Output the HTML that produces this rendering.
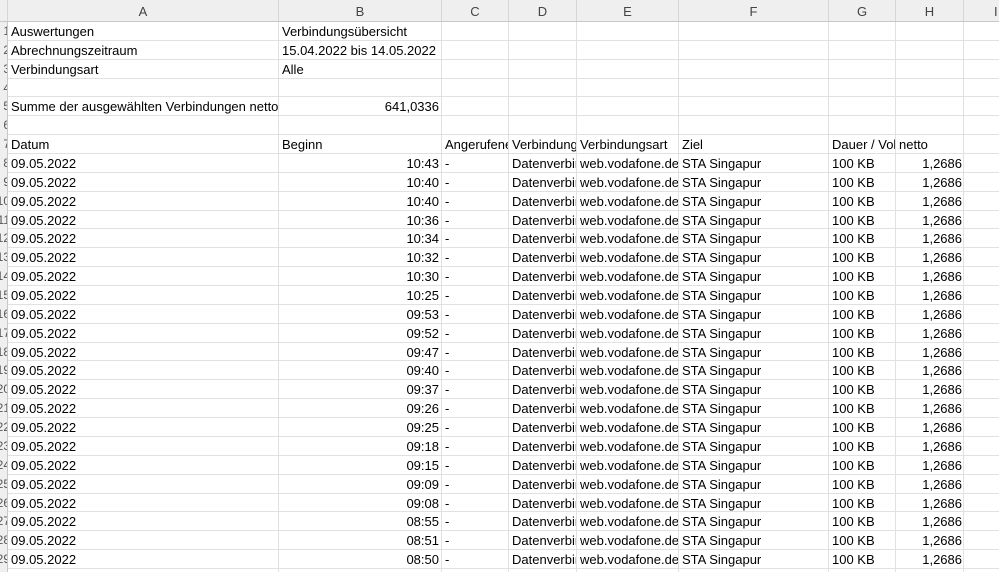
<!DOCTYPE html>
<html><head><meta charset="utf-8"><style>
html{overflow:hidden;height:572px}
body{margin:0;width:999px;height:572px;overflow:hidden;background:#fff;font-family:"Liberation Sans",Arial,sans-serif;font-size:13px;color:#000;position:relative}
.hdr{position:absolute;top:0;left:0;width:999px;height:22px;background:#efefef;border-bottom:1px solid #c8c8c8;box-sizing:border-box;z-index:2}
.hdr div{position:absolute;top:0;height:21px;line-height:23px;text-align:center;color:#444;font-size:13px;border-right:1px solid #d6d6d6;box-sizing:border-box}
.rh{position:absolute;left:0;top:22px;width:8px;height:550px;background:#efefef;border-right:1px solid #c8c8c8;box-sizing:border-box;overflow:hidden;z-index:2}
.rh div{position:absolute;right:-3px;height:19px;line-height:19px;font-size:12px;color:#555;width:20px;text-align:right}
.vl{position:absolute;top:22px;height:550px;width:1px;background:#e1e1e1}
.hl{position:absolute;left:8px;width:991px;height:1px;background:#e1e1e1}
.c{position:absolute;white-space:nowrap;overflow:hidden;height:17px;line-height:17px}
.r{text-align:right}
</style></head><body>
<div class="hdr">
<div style="left:0;width:8px"></div>
<div style="left:8px;width:271px">A</div>
<div style="left:279px;width:163px">B</div>
<div style="left:442px;width:67px">C</div>
<div style="left:509px;width:68px">D</div>
<div style="left:577px;width:102px">E</div>
<div style="left:679px;width:150px">F</div>
<div style="left:829px;width:67px">G</div>
<div style="left:896px;width:68px">H</div>
<div style="left:964px;width:40px;text-align:left;padding-left:30px">I</div>
</div>
<div class="rh" id="rh"></div>
<div id="g"></div>
<script>
(function(){
var xs=[279,442,509,577,679,829,896,964];
var g=document.getElementById('g'),h='';
xs.forEach(function(x){h+='<div class="vl" style="left:'+(x-1)+'px"></div>';});
var rH=18.86,T0=22;
for(var i=1;i<=29;i++){h+='<div class="hl" style="top:'+(T0+i*rH-1).toFixed(2)+'px"></div>';}
function cell(row,x,w,t,right){var y=T0+(row-1)*rH;return '<div class="c'+(right?' r':'')+'" style="top:'+(y+1).toFixed(2)+'px;left:'+x+'px;width:'+w+'px">'+t+'</div>';}
h+=cell(1,11,266,'Auswertungen')+cell(1,282,158,'Verbindungsübersicht');
h+=cell(2,11,266,'Abrechnungszeitraum')+cell(2,282,158,'15.04.2022 bis 14.05.2022');
h+=cell(3,11,266,'Verbindungsart')+cell(3,282,158,'Alle');
h+=cell(5,11,267,'Summe der ausgewählten Verbindungen netto')+cell(5,282,157,'641,0336',1);
var hd=[[11,266,'Datum'],[282,158,'Beginn'],[445,63,'Angerufene'],[512,64,'Verbindungsart'],[580,98,'Verbindungsart'],[682,146,'Ziel'],[832,63,'Dauer / Volumen'],[899,64,'netto']];
hd.forEach(function(a){h+=cell(7,a[0],a[1],a[2]);});
var t=['10:43','10:40','10:40','10:36','10:34','10:32','10:30','10:25','09:53','09:52','09:47','09:40','09:37','09:26','09:25','09:18','09:15','09:09','09:08','08:55','08:51','08:50'];
t.forEach(function(tm,k){var r=8+k;
h+=cell(r,11,266,'09.05.2022')+cell(r,282,157,tm,1)+cell(r,445,63,'-')+cell(r,512,64,'Datenverbindung')+cell(r,580,98,'web.vodafone.de')+cell(r,682,146,'STA Singapur')+cell(r,832,63,'100 KB')+cell(r,899,63,'1,2686',1);});
g.innerHTML=h;
var rh='';for(var i=1;i<=30;i++){rh+='<div style="top:'+((i-1)*rH).toFixed(2)+'px">'+i+'</div>';}
document.getElementById('rh').innerHTML=rh;
})();
</script>
</body></html>
